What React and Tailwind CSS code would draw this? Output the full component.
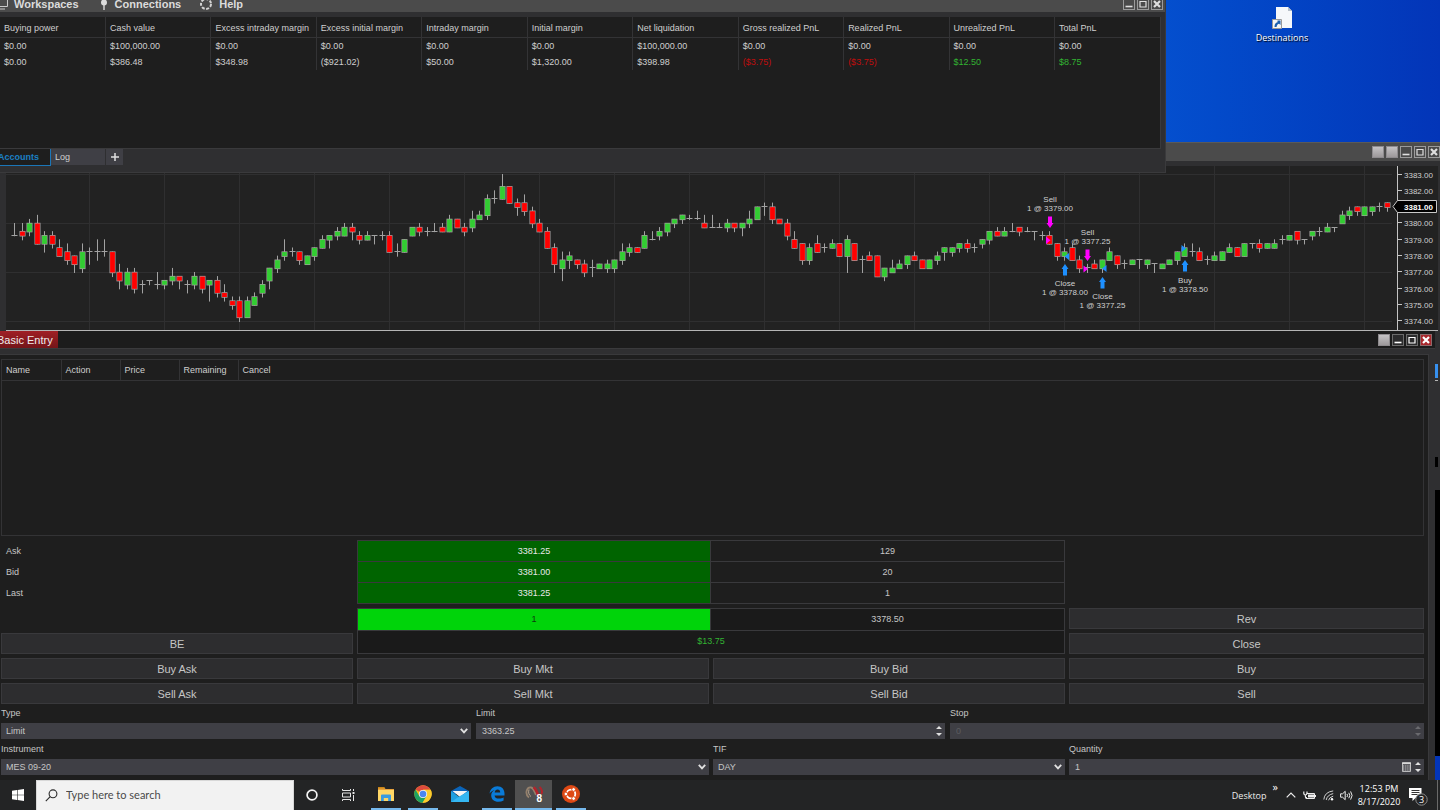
import React from "react";

/* ------------------------------------------------------------------ */
/* Chart data: [high, top, bottom, low, colour] in ticks below 3383.00 */
/* ------------------------------------------------------------------ */
const SERIES =
  "12 15 15 15 n,12 14 15 16 r,11 12 14 15 g,10 12 17 17 r,14 15 17 19 g,14 15 17 18 r,16 18 20 20 r,17 19 21 22 r,20 20 22 24 r,17 19 23 24 g," +
  "18 19 19 22 n,16 19 19 21 n,16 19 19 20 n,19 19 24 25 r,22 24 26 28 r,23 24 27 28 g,23 24 28 29 r,26 27 27 29 n,26 26 26 27 n,24 27 27 28 n," +
  "26 26 27 28 g,23 25 26 27 g,25 25 26 28 r,26 27 27 29 n,24 25 27 28 g,25 25 28 29 r,26 26 27 31 g,25 26 29 30 r,27 29 30 31 r,30 31 32 33 r," +
  "30 31 35 36 r,30 31 35 35 g,29 30 32 32 g,26 27 29 30 g,23 23 26 28 g,20 21 23 24 g,16 19 20 21 g,18 19 19 20 n,19 19 21 22 r,20 20 22 22 g," +
  "18 18 20 21 g,15 16 18 18 g,15 15 16 18 g,13 14 15 16 g,12 13 15 15 g,12 13 14 16 r,14 15 16 17 r,14 15 16 16 g,15 15 15 17 n,14 15 15 16 n," +
  "14 15 19 19 r,17 19 19 20 n,16 16 19 19 g,13 13 15 15 g,12 13 14 15 r,13 14 14 15 n,12 14 14 14 n,12 13 14 14 r,10 11 14 14 g,11 11 13 13 r," +
  "12 13 14 15 r,9 11 13 14 g,9 10 11 11 g,5 6 10 11 g,4 6 6 7 n,0 3 6 6 g,3 3 7 7 r,6 7 8 10 r,5 7 9 10 r,8 9 12 13 r," +
  "11 12 14 14 r,13 14 18 18 r,17 18 22 24 r,19 21 23 26 g,19 20 21 23 g,21 21 22 23 r,21 22 24 25 r,21 23 23 25 n,22 22 23 23 g,21 22 23 24 g," +
  "21 21 23 24 g,17 19 21 22 g,17 18 19 20 g,18 18 19 19 r,14 15 18 18 g,14 16 16 16 n,13 14 15 16 g,12 12 14 15 g,11 11 12 13 g,10 10 11 12 g," +
  "10 11 11 11 n,9 11 11 11 n,10 12 13 13 r,10 13 13 13 n,12 13 13 13 n,11 12 13 14 g,12 12 13 14 r,12 12 13 15 g,9 11 12 13 g,8 8 11 11 g," +
  "7 8 8 10 n,7 8 11 12 r,11 11 12 12 r,11 12 15 16 r,14 16 18 18 r,17 17 21 22 r,17 18 21 22 g,15 17 19 19 r,17 18 18 19 n,16 17 18 18 g," +
  "17 17 20 20 r,15 16 20 24 g,17 17 21 21 r,20 21 21 24 n,19 20 21 21 r,20 20 25 25 r,23 23 25 26 g,21 23 24 24 g,21 22 23 23 g,20 20 22 23 g," +
  "19 20 21 21 r,21 21 23 23 r,21 21 23 23 g,19 20 21 22 g,18 18 19 21 g,18 18 19 20 g,17 17 18 19 g,16 17 18 19 r,17 18 18 19 n,16 16 17 18 g," +
  "14 14 16 17 g,13 14 15 15 r,13 14 15 15 g,12 14 14 14 n,13 13 14 15 r,13 14 14 14 n,14 14 14 16 n,14 15 15 16 n,14 15 17 17 r,17 17 20 21 r," +
  "18 19 20 21 g,17 18 21 21 r,20 21 23 24 r,22 23 23 24 n,21 22 23 23 r,21 21 23 24 g,18 19 21 21 g,20 20 22 23 r,21 22 22 23 n,21 21 22 22 g," +
  "21 21 21 23 n,21 21 22 23 g,22 22 22 24 n,22 22 23 23 g,21 21 22 22 g,19 19 21 22 g,17 18 20 20 g,17 19 19 20 n,18 19 21 21 r,20 21 21 22 n," +
  "19 20 21 21 g,19 19 21 21 g,17 18 19 19 g,18 18 20 20 r,17 17 20 20 g,17 17 17 18 n,16 17 18 19 r,17 17 18 18 g,16 17 18 18 g,15 16 16 17 n," +
  "15 15 16 16 g,14 14 16 17 r,16 16 16 17 n,14 14 15 16 g,13 14 14 15 n,12 13 14 14 g,13 13 13 14 n,9 10 12 12 g,8 9 10 11 g,8 8 9 10 r," +
  "8 8 10 10 g,8 8 9 10 g,7 8 8 9 n,7 7 8 9 r";

const CANDLES = SERIES.split(",").map((row) => {
  const [h, t, b, l, c] = row.split(" ");
  return { h: +h, t: +t, b: +b, l: +l, c };
});

const tickY = (t) => 174.5 + 4.083 * t;

const TRADES = [
  { x: 1050, side: "down", arrow: 216, text: 202, label: "Sell", price: "1 @ 3379.00" },
  { x: 1087.5, side: "down", arrow: 249, text: 235, label: "Sell", price: "1 @ 3377.25" },
  { x: 1065, side: "up", arrow: 264, text: 286, label: "Close", price: "1 @ 3378.00" },
  { x: 1102.5, side: "up", arrow: 277, text: 299, label: "Close", price: "1 @ 3377.25" },
  { x: 1185, side: "up", arrow: 260, text: 283, label: "Buy", price: "1 @ 3378.50" },
];

function Candle({ i, d }) {
  const x = Math.floor(14.5 + 7.5 * i) + 0.5;
  const fill = d.c === "g" ? "#32cd32" : "#ff0000";
  const top = tickY(d.t) - 0.7;
  const height = tickY(d.b) - tickY(d.t) + 1.4;
  return (
    <g>
      <line x1={x} x2={x} y1={tickY(d.h) - 0.5} y2={tickY(d.l) + 0.5} stroke="#a2a2a2" />
      {d.c === "n" ? (
        <line x1={x - 3} x2={x + 3} y1={Math.round(tickY(d.t)) - 0.5} y2={Math.round(tickY(d.t)) - 0.5} stroke="#a2a2a2" />
      ) : (
        <>
          <rect x={x - 3} y={top} width="6" height={height} fill="#a8a2a2" />
          <rect x={x - 2.4} y={top + 0.7} width="4.8" height={height - 1.4} fill={fill} />
        </>
      )}
    </g>
  );
}

function PriceChart() {
  return (
    <svg className="h-[165px] min-w-0 flex-1 bg-[#222222]" aria-label="Price chart" role="img">
      <g transform="translate(-6 -166)" fontFamily="Liberation Sans, Arial, sans-serif">
        {Array.from({ length: 18 }, (_, k) => (
          <line key={k} x1={89.5 + 75 * k} x2={89.5 + 75 * k} y1="166" y2="331" stroke="#2f2f30" />
        ))}
        {[174.5, 223.5, 272.5, 321.5].map((y) => (
          <line key={y} x1="6" x2="3000" y1={y} y2={y} stroke="#2f2f30" />
        ))}
        {CANDLES.map((d, i) => (
          <Candle key={i} i={i} d={d} />
        ))}
        <path d="M1046 236.5l4.5 3.7-4.5 3.8zM1083.5 265.500l4.500 3.500-4.500 3.500z" fill="#ff00ff" />
        <path d="M1069 253v7l-4.500-3.500zM1106.500 265v7l-4.500-3.500zM1181.500 245v7l4.500-3.500z" fill="#1e90ff" />
        {TRADES.map((t, k) => (
          <g key={k}>
            {t.side === "down" ? (
              <path transform={`translate(${t.x} ${t.arrow})`} d="M-2 .5h4v6.500h1.500l-3.500 5-3.500-5h1.500z" fill="#ff00ff" />
            ) : (
              <path transform={`translate(${t.x} ${t.arrow})`} d="M0 0l3.500 5h-1.500v6.500h-4V5h-1.500z" fill="#1e90ff" />
            )}
            <text x={t.x} y={t.text} fontSize="8" textAnchor="middle" fill="#d0d0d0">{t.label}</text>
            <text x={t.x} y={t.text + 9} fontSize="8" textAnchor="middle" fill="#d0d0d0">{t.price}</text>
          </g>
        ))}
        <line x1="6" x2="3000" y1="330.500" y2="330.500" stroke="#b5b5b5" />
      </g>
    </svg>
  );
}

function PriceAxis() {
  const levels = [3383, 3382, 3380, 3379, 3378, 3377, 3376, 3375, 3374];
  return (
    <svg className="h-[165px] w-[46px] shrink-0 bg-[#222222]" aria-label="Price scale" role="img">
      <g transform="translate(-1392 -166)" fontFamily="Liberation Sans, Arial, sans-serif">
        <line x1="1397.500" x2="1397.500" y1="166" y2="331" stroke="#c4c4c4" />
        {levels.map((p) => {
          const y = tickY((3383 - p) * 4);
          return (
            <g key={p}>
              <line x1="1398" x2="1402" y1={Math.round(y) - 0.5} y2={Math.round(y) - 0.5} stroke="#c4c4c4" />
              <text x="1404" y={y + 3} fontSize="8" fill="#d0d0d0">{p}.00</text>
            </g>
          );
        })}
        <path d="M1393 206.500l4.500-6h39v12h-39z" fill="#000" stroke="#c8c8c8" />
        <text x="1404" y="210" fontSize="8" fontWeight="bold" fill="#fff">3381.00</text>
        <line x1="1392" x2="1438" y1="330.500" y2="330.500" stroke="#b5b5b5" />
      </g>
    </svg>
  );
}

/* ---------------------------- window frame ---------------------------- */

const GLYPHS = {
  min: <path d="M2.500 8.500h7" strokeWidth="1.600" />,
  max: <path d="M2.500 3.500h7M3 3v6h6V3" strokeWidth="1.200" />,
  close: <path d="M3 3l6 6M9 3l-6 6" strokeWidth="2.200" />,
};

function WindowButton({ kind, tone }) {
  const toneClass =
    tone === "red"
      ? "bg-[#a8272c] border-[#8d6a6c]"
      : tone === "dark"
      ? "bg-[#2b2b2c] border-[#6c6c6c]"
      : "bg-[#4a4a4a] border-[#9b9b9b]";
  if (kind === "blank") {
    return <button type="button" aria-label="Link" className="size-3 border border-[#8e8b8e] bg-linear-to-b from-[#c4c2c4] to-[#9d999b]" />;
  }
  return (
    <button type="button" aria-label={kind} className={`flex size-3 items-center justify-center border ${toneClass}`}>
      <svg viewBox="0 0 12 12" className="size-3 shrink-0" fill="none" stroke={tone ? "#ffffff" : "#dedede"}>
        {GLYPHS[kind]}
      </svg>
    </button>
  );
}

/* --------------------------- control center --------------------------- */

const ACCOUNT_COLUMNS = [
  ["Buying power", "$0.00", "$0.00"],
  ["Cash value", "$100,000.00", "$386.48"],
  ["Excess intraday margin", "$0.00", "$348.98"],
  ["Excess initial margin", "$0.00", "($921.02)"],
  ["Intraday margin", "$0.00", "$50.00"],
  ["Initial margin", "$0.00", "$1,320.00"],
  ["Net liquidation", "$100,000.00", "$398.98"],
  ["Gross realized PnL", "$0.00", "($3.75)", "text-[#c00d0d]"],
  ["Realized PnL", "$0.00", "($3.75)", "text-[#c00d0d]"],
  ["Unrealized PnL", "$0.00", "$12.50", "text-[#32b432]"],
  ["Total PnL", "$0.00", "$8.75", "text-[#32b432]"],
];

function ControlCenter() {
  return (
    <section className="absolute -left-1 -top-[5px] flex h-[178px] w-[1170px] flex-col border-b border-r border-[#3a3a3c] bg-[#2f2f31]">
      <header className="flex h-[17px] shrink-0 items-center bg-[#4b4b4b] pr-0.5">
        <nav className="flex flex-1 items-center text-[11px] font-bold leading-4 text-[#dcdcdc]">
          <button type="button" className="flex items-center gap-1.5">
            <svg viewBox="0 0 12 12" className="size-3" fill="none" stroke="#c9c9c9"><path d="M3.500 1.500h8v7h-8zM1 4v7h8" /></svg>
            Workspaces
          </button>
          <button type="button" className="ml-5 flex items-center gap-1.5">
            <svg viewBox="0 0 10 12" className="h-3 w-2.5" fill="#dcdcdc"><circle cx="5" cy="4.500" r="3" /><path d="M4.300 7h1.400v5H4.300z" /></svg>
            Connections
          </button>
          <button type="button" className="ml-[18px] flex items-center gap-1.5">
            <svg viewBox="0 0 14 14" className="size-3.5" fill="none" stroke="#d4d4d4" strokeWidth="2" strokeDasharray="3 1.500"><circle cx="7" cy="7" r="5" /></svg>
            Help
          </button>
        </nav>
        <div className="flex gap-0.5">
          <WindowButton kind="min" />
          <WindowButton kind="max" />
          <WindowButton kind="close" />
        </div>
      </header>
      <div className="mr-1 mt-[5px] h-[132px] border-b border-r border-[#3a3a3c] bg-[#1e1e1e] pl-1">
        <table className="w-full table-fixed border-collapse text-left text-[9px] leading-4 text-[#cfcfcf]">
          <thead>
            <tr className="h-5 border-b border-[#333335]">
              {ACCOUNT_COLUMNS.map(([title]) => (
                <th key={title} className="whitespace-nowrap border-r border-[#333335] pl-1 pt-0.5 font-normal last:border-r-0">{title}</th>
              ))}
            </tr>
          </thead>
          <tbody>
            {[1, 2].map((r) => (
              <tr key={r} className="h-4">
                {ACCOUNT_COLUMNS.map((c) => (
                  <td key={c[0]} className={`border-r border-[#333335] pl-1 last:border-r-0 ${r === 2 && c[3] ? c[3] : ""}`}>{c[r]}</td>
                ))}
              </tr>
            ))}
          </tbody>
        </table>
      </div>
      <div className="flex items-start text-[9px] leading-4" role="tablist">
        <button type="button" role="tab" aria-selected="true" className="h-[17px] w-[55px] border-b border-r border-[#1b76b8] bg-[#1e1e1e] pl-0.5 text-left font-bold text-[#1b80c4]">Accounts</button>
        <button type="button" role="tab" aria-selected="false" className="h-4 w-[54px] bg-[#3f3f45] pl-1 text-left text-[#cfcfcf]">Log</button>
        <button type="button" aria-label="Add tab" className="ml-px flex h-4 w-[17px] items-center justify-center bg-[#3f3f45]">
          <svg viewBox="0 0 8 8" className="size-2" stroke="#e0e0e0" strokeWidth="1.500"><path d="M4 0v8M0 4h8" /></svg>
        </button>
      </div>
    </section>
  );
}

/* ---------------------------- chart window ---------------------------- */

function ChartWindow() {
  return (
    <section className="absolute inset-x-0 top-[142px] h-[348px] border-t border-[#5a5a5a] bg-[#2f2f31]">
      <header className="flex h-[18px] items-center justify-end gap-0.5 bg-[#4b4b4b]">
        <WindowButton kind="blank" />
        <WindowButton kind="blank" />
        <WindowButton kind="min" />
        <WindowButton kind="max" />
        <WindowButton kind="close" />
      </header>
      <div className="mt-[5px] flex pl-1.5 pr-0.5">
        <PriceChart />
        <PriceAxis />
      </div>
      <div className="mt-[33px] flex flex-col items-end pr-0.5">
        <span className="h-3.5 w-[3px] bg-[#3791f0]" />
        <span className="mt-0.5 h-px w-[5px] bg-[#b5b5b5]" />
        <span className="mt-[76px] h-2.5 w-[3px] bg-black" />
      </div>
    </section>
  );
}

/* ------------------------- order entry window ------------------------- */

function ActionButton({ children, className = "" }) {
  return (
    <button type="button" className={`h-[21px] border border-[#39393c] bg-[#2d2d2f] text-[11px] leading-4 text-[#c6c6c6] ${className}`}>
      {children}
    </button>
  );
}

function Field({ id, label, className = "", children }) {
  return (
    <div className={`min-w-0 ${className}`}>
      <label htmlFor={id} className="block h-[19px] text-[9px] leading-[19px] text-[#c6c6c6]">{label}</label>
      {children}
    </div>
  );
}

function Select({ id, value }) {
  return (
    <div className="relative h-4">
      <select id={id} defaultValue={value} className="block h-4 w-full appearance-none bg-[#3f3f45] pl-[5px] text-[9px] leading-4 text-[#c6c6c6] outline-none">
        <option>{value}</option>
      </select>
      <svg viewBox="0 0 8 6" className="pointer-events-none absolute right-[3px] top-[5px] h-1.5 w-2" fill="none" stroke="#e0e0e0" strokeWidth="1.800"><path d="M.8 .8L4 4.400 7.200 .8" /></svg>
    </div>
  );
}

function Spinner({ dim }) {
  return (
    <svg viewBox="0 0 6 12" className="h-3 w-1.5 shrink-0" fill={dim ? "#6a6a6e" : "#e0e0e0"}>
      <path d="M3 1l3 3H0zM3 11L0 8h6z" />
    </svg>
  );
}

function NumberBox({ id, value, disabled, calculator }) {
  return (
    <div className="flex h-4 items-center gap-1 bg-[#3f3f45] pl-1.5 pr-[3px]">
      <input id={id} defaultValue={value} disabled={disabled} inputMode="decimal" className="h-4 min-w-0 flex-1 bg-transparent text-[9px] leading-4 text-[#c6c6c6] outline-none disabled:text-[#5c5c60]" />
      {calculator && (
        <svg viewBox="0 0 9 10" className="h-2.5 w-[9px] shrink-0" fill="none" stroke="#d8d8d8">
          <path d="M.5 .5h8v9h-8z" strokeWidth=".8" />
          <path d="M0 1.500h9" strokeWidth="1.400" />
          <path d="M1 4h7.500M1 6h7.500M1 8h7.500" strokeDasharray="1.400 .7" />
        </svg>
      )}
      <Spinner dim={disabled} />
    </div>
  );
}

const QUOTES = [
  ["Ask", "3381.25", "129"],
  ["Bid", "3381.00", "20"],
  ["Last", "3381.25", "1"],
];

function OrderEntry() {
  return (
    <section className="absolute bottom-0 left-0 right-[5px] top-[331px] flex flex-col bg-[#2f2f31] pr-1.5">
      <header className="-mr-1.5 flex h-[18px] shrink-0 items-center justify-between border-b border-[#3a3a3c] bg-[#1c1c1c] pr-[3px]">
        <h2 className="-ml-[3px] h-full bg-linear-to-b from-[#a02025] to-[#741519] pr-[5px] text-[11px] leading-[18px] text-[#eeeeee]">Basic Entry</h2>
        <div className="flex gap-0.5">
          <WindowButton kind="blank" />
          <WindowButton kind="min" tone="dark" />
          <WindowButton kind="max" tone="dark" />
          <WindowButton kind="close" tone="red" />
        </div>
      </header>
      <div className="mt-[5px] flex flex-1 flex-col border-r border-t border-[#39393b] bg-[#1e1e1e] pl-px pr-1 pt-1">
        <div className="h-[177px] border border-[#333335]">
          <table className="w-full table-fixed border-collapse text-left text-[9px] leading-4 text-[#cfcfcf]">
            <thead>
              <tr className="h-5 border-b border-[#333335]">
                {["Name", "Action", "Price", "Remaining"].map((h) => (
                  <th key={h} className="w-[59px] border-r border-[#333335] pl-1 font-normal">{h}</th>
                ))}
                <th className="pl-1 font-normal">Cancel</th>
              </tr>
            </thead>
            <tbody />
          </table>
        </div>

        <div className="mt-1 grid grid-cols-[352fr_352fr_352fr_355fr] gap-x-1 text-[9px] text-[#c6c6c6]">
          <dl className="flex flex-col pl-[5px] pt-px leading-[21px]">
            {QUOTES.map(([k]) => (
              <dt key={k} className="h-[21px]">{k}</dt>
            ))}
          </dl>
          <div className="col-span-2 h-16 border border-b-0 border-[#39393c]">
            {QUOTES.map(([k, price, size]) => (
              <div key={k} className="grid h-[21px] grid-cols-2 border-b border-[#39393c] text-center leading-5">
                <span className="border-r border-[#39393c] bg-[#006400] text-[#e8e8e8]">{price}</span>
                <span>{size}</span>
              </div>
            ))}
          </div>
        </div>

        <div className="mt-1 grid grid-cols-[352fr_352fr_352fr_355fr] gap-1 text-[#c6c6c6]">
          <ActionButton className="col-start-1 row-start-2">BE</ActionButton>
          <div className="col-span-2 col-start-2 row-span-2 row-start-1 border border-[#39393c] bg-[#1a1a1a] text-center text-[9px] leading-[21px]">
            <div className="grid h-[22px] grid-cols-2 border-b border-[#39393c]">
              <span className="border-r border-[#39393c] bg-[#00d40a] text-[#0d3a0d]">1</span>
              <span>3378.50</span>
            </div>
            <div className="text-[#32b432]">$13.75</div>
          </div>
          <ActionButton className="col-start-4 row-start-1">Rev</ActionButton>
          <ActionButton className="col-start-4 row-start-2">Close</ActionButton>
        </div>
        <div className="mt-1 grid grid-cols-[352fr_352fr_352fr_355fr] gap-1">
          {["Buy Ask", "Buy Mkt", "Buy Bid", "Buy", "Sell Ask", "Sell Mkt", "Sell Bid", "Sell"].map((t) => (
            <ActionButton key={t}>{t}</ActionButton>
          ))}
        </div>

        <div className="grid grid-cols-[470fr_469fr_474fr] gap-x-[5px]">
          <Field id="type" label="Type"><Select id="type" value="Limit" /></Field>
          <Field id="limit" label="Limit"><NumberBox id="limit" value="3363.25" /></Field>
          <Field id="stop" label="Stop"><NumberBox id="stop" value="0" disabled /></Field>
        </div>
        <div className="mt-px grid grid-cols-[352fr_352fr_352fr_355fr] gap-x-1">
          <Field id="instrument" label="Instrument" className="col-span-2"><Select id="instrument" value="MES 09-20" /></Field>
          <Field id="tif" label="TIF"><Select id="tif" value="DAY" /></Field>
          <Field id="qty" label="Quantity"><NumberBox id="qty" value="1" calculator /></Field>
        </div>
      </div>
    </section>
  );
}

/* ------------------------------ taskbar ------------------------------- */

function TaskIcon({ label, running, active, children }) {
  return (
    <button
      type="button"
      aria-label={label}
      className={`flex h-full w-[37px] items-center justify-center ${active ? "bg-[#505050]" : ""}`}
    >
      <span className={`flex h-full items-center justify-center border-b-2 ${active ? "w-full" : "w-[30px]"} ${running ? "border-[#76b9ed]" : "border-transparent"}`}>
        {children}
      </span>
    </button>
  );
}

function Taskbar() {
  return (
    <footer className="flex h-[30px] shrink-0 items-stretch bg-[#232425] font-['Open_Sans',sans-serif] text-white">
      <button type="button" aria-label="Start" className="flex w-9 items-center justify-center">
        <svg viewBox="0 0 12 12" className="size-3" fill="#ffffff"><path d="M0 1.700L5 1v4.700H0zM5.600.9L12 0v5.700H5.600zM0 6.300h5V11l-5-.7zM5.600 6.300H12V12l-6.400-.9z" /></svg>
      </button>
      <label className="flex w-[258px] items-center gap-2 border border-b-0 border-[#d8d8d8] bg-[#f2f2f2] px-2">
        <svg viewBox="0 0 13 13" className="size-[13px]" fill="none" stroke="#2b2b2b" strokeWidth="1.100"><circle cx="8" cy="4.800" r="3.900" /><path d="M5.200 7.700L.8 12.200" /></svg>
        <input aria-label="Search" placeholder="Type here to search" className="min-w-0 flex-1 bg-transparent font-[Lato,sans-serif] text-[11px] outline-none placeholder:text-[#4a4a4a]" />
      </label>
      <button type="button" aria-label="Cortana" className="flex w-9 items-center justify-center">
        <svg viewBox="0 0 12 12" className="size-3" fill="none" stroke="#f4f4f4" strokeWidth="1.700"><circle cx="6" cy="6" r="4.900" /></svg>
      </button>
      <button type="button" aria-label="Task view" className="mr-px flex w-9 items-center justify-center">
        <svg viewBox="0 0 13 12" className="h-3 w-[13px]" fill="none" stroke="#e6e6e6"><path d="M.5 0v1.500h8V0M.5 12v-1.500h8V12M.5 4h8v4h-8zM11.500 0v2M11.500 6v6" /><path d="M10.500 4h2" strokeWidth="2" /></svg>
      </button>
      <TaskIcon label="File Explorer" running>
        <svg viewBox="0 0 18 16" className="h-4 w-[18px]"><path d="M1 1h6l1.500 2H17v12H1z" fill="#e8a33d" /><path d="M1 4h16v11H1z" fill="#ffd766" /><path d="M1 1h6l1 1.500H1z" fill="#c98516" /><path d="M4 15V9.500Q4 8.500 5 8.500h8Q14 8.500 14 9.500V15h-2.800v-3H6.800v3z" fill="#3a9be0" /></svg>
      </TaskIcon>
      <TaskIcon label="Chrome" running>
        <svg viewBox="0 0 18 18" className="size-[18px]">
          <circle cx="9" cy="9" r="8.700" fill="#fbc116" />
          <path d="M9 9L1.500 4.600A8.700 8.700 0 0 1 16.550 4.700H9z" fill="#dd4b3e" />
          <path d="M1.500 4.600A8.700 8.700 0 0 0 8.600 17.700L12.700 11 9 9 5.300 11z" fill="#1da362" />
          <path d="M9 4.700h7.500A8.700 8.700 0 0 1 8.600 17.700L12.700 11z" fill="#fccb2e" />
          <circle cx="9" cy="9" r="4.100" fill="#f5f5f5" /><circle cx="9" cy="9" r="3.300" fill="#4a86f0" />
        </svg>
      </TaskIcon>
      <TaskIcon label="Mail">
        <svg viewBox="0 0 18 16" className="h-4 w-[18px]"><path d="M0 5l9-5 9 5v3H0z" fill="#0b64b8" /><path d="M1.500 5h15L9 11z" fill="#f4f4f4" /><path d="M0 5l9 6.500L18 5v11H0z" fill="#1f9fe0" /><path d="M0 16l9-6 9-5v11z" fill="#35b7f2" /></svg>
      </TaskIcon>
      <TaskIcon label="Edge" running>
        <svg viewBox="0 0 16 16" className="size-4" fill="#0a7bd8"><path d="M.6 7.400C1.200 3.200 4.200.3 8.400.3c4.500 0 7.100 3.200 7.100 7.200v1.900H5.600c.1 2.300 2.200 3.200 4.400 3.200 1.700 0 3.200-.5 4.600-1.200v3.200c-1.500.8-3.300 1.200-5.200 1.200-4.400 0-7.200-2.500-7.200-6.300 0-2.500 1.300-4.500 3.500-5.600C3.700 4.400 1.900 5.500.6 7.400zM5.700 6.500h5.500c0-1.700-.9-2.900-2.600-2.900-1.600 0-2.700 1.200-2.900 2.900z" /></svg>
      </TaskIcon>
      <TaskIcon label="NinjaTrader" running active>
        <svg viewBox="0 0 18 16" className="h-4 w-[18px]" fill="none">
          <path d="M4 11.500C-.5 8 1.500 1 6 1.500c2.500.5 3.500 4 5 7.500" stroke="#94806c" strokeWidth="1.800" />
          <path d="M4 3.500c-1 3.500 0 5.500 2 7" stroke="#b8a48e" />
          <path d="M8.500 1.500c2.500 1 3.500 5 5 8.500" stroke="#b3222a" strokeWidth="2.600" />
          <path d="M14.500 1c2.500 2 3 4.500 2 7" stroke="#b3222a" strokeWidth="2" />
          <text x="11.500" y="16" fontSize="10" fontWeight="bold" fontFamily="Liberation Sans, sans-serif" fill="#ffffff">8</text>
        </svg>
      </TaskIcon>
      <TaskIcon label="Ubuntu" running>
        <svg viewBox="0 0 18 18" className="size-[18px]"><circle cx="9" cy="9" r="9" fill="#dd4814" /><circle cx="9" cy="9" r="4.300" fill="none" stroke="#fff" strokeWidth="1.800" /><g fill="#fff" stroke="#dd4814" strokeWidth="1"><circle cx="3.900" cy="9" r="1.900" /><circle cx="11.600" cy="4.500" r="1.900" /><circle cx="11.600" cy="13.500" r="1.900" /></g></svg>
      </TaskIcon>
      <div className="flex-1" />
      <div className="flex items-center text-[9px] leading-[13px]">
        <span className="text-[#ececec]">Desktop</span>
        <button type="button" aria-label="More" className="ml-1.5 self-start text-[11px] leading-[13px]">»</button>
        <svg viewBox="0 0 10 6" className="ml-2 h-1.5 w-2.5" fill="none" stroke="#eeeeee" strokeWidth="1.200"><path d="M.7 5.300L5 1l4.300 4.300" /></svg>
        <svg viewBox="0 0 13 9" className="ml-[7px] h-[9px] w-[13px]" fill="none" stroke="#eeeeee"><path d="M4 2.500h7.500v5h-8V6M12.500 4v2" /><path d="M5 5h6" strokeWidth="3" /><path d="M.8.5v1.500q0 2 1.500 2T4 2V.5M2.400 4v1.500q0 2 1.600 2" strokeWidth="1.200" /></svg>
        <svg viewBox="0 0 11 11" className="ml-[7px] size-[11px]" fill="none" stroke="#d0d0d0"><path d="M.8 9.500Q1.500 2 10.200 .9M3.200 10Q4 5 10.200 3.600M5.500 10.300Q6.300 7.200 10.200 6.200" /><circle cx="9" cy="9.300" r="1.200" fill="#fff" stroke="none" /></svg>
        <svg viewBox="0 0 13 11" className="ml-1.5 h-[11px] w-[13px]" fill="none" stroke="#eeeeee"><path d="M.6 3.800h2L5.200 1.300v8.400L2.600 7.200h-2z" /><path d="M7 4q1 1.500 0 3M8.800 2.800q1.900 2.700 0 5.400M10.600 1.400q3 4.100 0 8.200" /></svg>
        <time className="ml-1 w-11 text-center leading-[13px]">12:53 PM<br />8/17/2020</time>
        <svg viewBox="0 0 20 19" className="ml-2 mt-0.5 h-[19px] w-5"><path d="M0 1h12.500v10H6.500L3.500 14v-3H0z" fill="#fff" /><path d="M2.500 3.500h8M2.500 5.500h8M2.500 7.500h6" stroke="#333" /><circle cx="12.500" cy="12.500" r="5.700" fill="#232425" stroke="#8d8d8d" /><text x="12.500" y="15.800" fontSize="9" textAnchor="middle" fill="#fff" fontFamily="Open Sans, sans-serif">3</text></svg>
        <span className="ml-2 mr-0.5 h-[30px] w-px bg-[#6a6a6a]" />
      </div>
    </footer>
  );
}

/* ------------------------------ desktop ------------------------------- */

export default function App() {
  return (
    <div className="flex h-screen min-h-[810px] flex-col overflow-hidden font-['Liberation_Sans',Arial,sans-serif]">
      <main className="relative flex-1 overflow-hidden bg-linear-to-r from-[#0450cf] from-80% to-[#0335b8]">
        <a href="#destinations" className="absolute right-[133px] top-1.5 flex w-[50px] flex-col items-center font-['Open_Sans',sans-serif] text-[9px] leading-3 text-white [text-shadow:1px_1px_1px_#000]">
          <svg viewBox="0 0 20 24" className="h-6 w-5"><path d="M4 1h12l4 4v17H4z" fill="#f6f8fa" /><path d="M16 1v4h4z" fill="#b8c0c8" /><path d="M.5 13.500h9v9h-9z" fill="#f4f4f4" stroke="#9a9a9a" /><path d="M2.500 21c0-3 1-4.500 3-4.800V14.500h3V19L7.200 17.800C5.500 18 5 19 4.500 21z" fill="#1b5fae" /></svg>
          <span className="mt-0.5">Destinations</span>
        </a>
        <div className="absolute bottom-6 right-0 top-[490px] w-[5px] bg-black" />
        <ChartWindow />
        <ControlCenter />
        <OrderEntry />
      </main>
      <Taskbar />
    </div>
  );
}
